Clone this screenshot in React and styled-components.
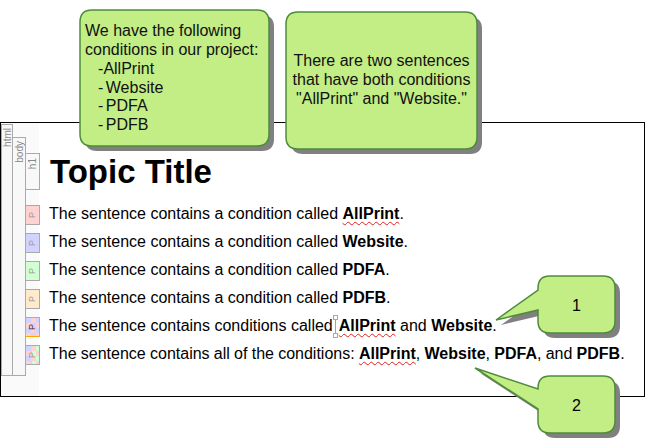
import React from "react";
import styled, { createGlobalStyle, css } from "styled-components";

const Global = createGlobalStyle`
  html, body { margin: 0; padding: 0; background: #fff; }
  body { font-family: "Liberation Sans", Arial, sans-serif; color: #000; }
`;

const Page = styled.div`
  position: relative;
  width: 645px;
  height: 448px;
  overflow: hidden;
  padding-top: 122px;
  box-sizing: border-box;
`;

const Frame = styled.div`
  display: flex;
  box-sizing: border-box;
  width: 645px;
  height: 275px;
  border: 1px solid #000;
  background: #fff;
`;

const Gutter = styled.div`
  display: flex;
  align-items: flex-start;
  width: 38px;
  flex: none;
  background: #fafafa;
`;

const StructTag = styled.div`
  box-sizing: border-box;
  flex: none;
  display: flex;
  justify-content: center;
  align-items: flex-start;
  border: 1px solid #aaa;
  background: #f8f8f8;
  color: #8a8a8a;
  font-size: 10px;
  line-height: 11px;
`;

const HtmlTag = styled(StructTag)`
  width: 12px;
  height: 252px;
  margin-top: 1px;
  padding-top: 3px;
`;

const BodyTag = styled(StructTag)`
  width: 14px;
  height: 239px;
  margin-top: 14px;
  margin-left: -1px;
  padding-top: 3px;
`;

const Label = styled.span`
  writing-mode: vertical-rl;
  transform: rotate(180deg);
  white-space: nowrap;
`;

const TagColumn = styled.div`
  display: flex;
  flex-direction: column;
  width: 14px;
  margin-left: -1px;
  margin-top: 30px;
`;

const H1Tag = styled(StructTag)`
  width: 15px;
  height: 37px;
  margin-bottom: 15px;
  padding-top: 4px;
`;

const swatch = {
  red: css`background: #ffd2d2;`,
  blue: css`background: #d2d2ff;`,
  green: css`background: #d2ffd2;`,
  tan: css`background: #ffeacc;`,
  both: css`
    background-color: #d2d2ff;
    background-image: conic-gradient(#ffd2d2 25%, transparent 0 50%, #ffd2d2 0 75%, transparent 0);
    background-size: 10px 10px;
  `,
  all: css`
    background-color: #d2d2ff;
    background-image:
      conic-gradient(#ffd2d2 25%, transparent 0 50%, #ffd2d2 0 75%, transparent 0),
      linear-gradient(90deg, transparent 50%, #d2ffd2 50%);
    background-size: 10px 10px, 100% 100%;
  `,
};

const PTag = styled(StructTag)`
  width: 15px;
  height: 20px;
  margin-bottom: 8px;
  justify-content: center;
  align-items: center;
  font-size: 9px;
  color: ${(p) => (p.$active ? "#333" : "#999")};
  border-color: ${(p) => (p.$active ? "#ffa500" : "#aaa")};
  ${(p) => swatch[p.$tone]}
`;

const Content = styled.div`
  flex: 1;
  padding: 30px 0 0 10px;
`;

const Title = styled.h1`
  margin: 0 0 14px 1px;
  font-size: 33px;
  line-height: 37px;
  font-weight: 700;
`;

const Sentence = styled.p`
  position: relative;
  margin: 0;
  height: 28px;
  font-size: 16px;
  line-height: 20px;
  white-space: nowrap;
  word-spacing: ${(p) => (p.$tight ? "-0.2px" : "0")};
`;

const Term = styled.b`
  font-weight: 700;
  ${(p) => p.$flagged && css`
    text-decoration: underline wavy #e02020 1px;
    text-underline-offset: 2px;
    text-decoration-skip-ink: none;
  `}
`;

const Caret = styled.span`
  display: inline-block;
  position: relative;
  width: 6px;
  height: 20px;
  vertical-align: top;
  &::before {
    content: "";
    position: absolute;
    left: 2px;
    top: 0;
    bottom: 0;
    border-left: 1px solid #a0a0a0;
  }
`;

const CaretEnd = styled.i`
  position: absolute;
  left: 0;
  ${(p) => (p.$bottom ? "bottom: -2px;" : "top: -1px;")}
  box-sizing: border-box;
  width: 5px;
  height: 5px;
  border: 1px solid #a8a8a8;
  background: #fff;
`;

const Callout = styled.div`
  position: absolute;
  left: ${(p) => p.$x}px;
  top: ${(p) => p.$y}px;
  width: ${(p) => p.$w}px;
  height: ${(p) => p.$h}px;
`;

const CalloutShape = styled.svg`
  position: absolute;
  left: 0;
  top: 0;
  overflow: visible;
`;

const NoteText = styled.div`
  position: relative;
  box-sizing: border-box;
  height: 100%;
  display: flex;
  flex-direction: column;
  justify-content: center;
  font-size: 16px;
  line-height: 18.7px;
  color: #111;
  text-align: ${(p) => p.$align || "left"};
  padding: ${(p) => (p.$align ? "0 5px" : "1px 5px 0")};
`;

const ListLine = styled.div`
  padding-left: 13px;
  word-spacing: ${(p) => p.$gap}px;
`;

const NumberText = styled.div`
  position: absolute;
  left: 0;
  right: 0;
  top: 20px;
  text-align: center;
  font-size: 16px;
  line-height: 20px;
`;

const FILL = "#c3ed85";
const STROKE = "#4e8c3a";

function Shape({ w, h, r = 12, tail }) {
  const d = [
    `M${r} 0 H${w - r} Q${w} 0 ${w} ${r} V${h - r} Q${w} ${h} ${w - r} ${h} H${r} Q0 ${h} 0 ${h - r}`,
    tail ? `V${tail[2]} L${tail[1][0]} ${tail[1][1]} L0 ${tail[0]}` : "",
    `V${r} Q0 0 ${r} 0 Z`,
  ].join(" ");
  return (
    <CalloutShape width={w} height={h} viewBox={`0 0 ${w} ${h}`}>
      <path d={d} fill="#808080" transform="translate(5 5)" />
      <path d={d} fill={FILL} stroke={STROKE} strokeWidth="1.5" />
    </CalloutShape>
  );
}

const rows = [
  { tone: "red", body: <>The sentence contains a condition called <Term $flagged>AllPrint</Term>.</> },
  { tone: "blue", body: <>The sentence contains a condition called <Term>Website</Term>.</> },
  { tone: "green", body: <>The sentence contains a condition called <Term>PDFA</Term>.</> },
  { tone: "tan", body: <>The sentence contains a condition called <Term>PDFB</Term>.</> },
  { tone: "both", active: true, body: <>The sentence contains conditions called<Caret><CaretEnd /><CaretEnd $bottom /></Caret><Term $flagged>AllPrint</Term> and <Term>Website</Term>.</> },
  { tone: "all", tight: true, body: <>The sentence contains all of the conditions: <Term $flagged>AllPrint</Term>, <Term>Website</Term>, <Term>PDFA</Term>, and <Term>PDFB</Term>.</> },
];

export default function App() {
  return (
    <Page>
      <Global />
      <Frame>
        <Gutter>
          <HtmlTag><Label>html</Label></HtmlTag>
          <BodyTag><Label>body</Label></BodyTag>
          <TagColumn>
            <H1Tag><Label>h1</Label></H1Tag>
            {rows.map((r, i) => (
              <PTag key={i} $tone={r.tone} $active={r.active}><Label>P</Label></PTag>
            ))}
          </TagColumn>
        </Gutter>
        <Content>
          <Title>Topic Title</Title>
          {rows.map((r, i) => <Sentence key={i} $tight={r.tight}>{r.body}</Sentence>)}
        </Content>
      </Frame>

      <Callout $x={80} $y={10} $w={189} $h={136}>
        <Shape w={189} h={136} />
        <NoteText>
          <div>We have the following</div>
          <div>conditions in our project:</div>
          <ListLine $gap={-3.5}>- AllPrint</ListLine>
          <ListLine $gap={-2}>- Website</ListLine>
          <ListLine $gap={-2}>- PDFA</ListLine>
          <ListLine $gap={-2}>- PDFB</ListLine>
        </NoteText>
      </Callout>

      <Callout $x={286} $y={12} $w={191} $h={137}>
        <Shape w={191} h={137} />
        <NoteText $align="center">
          <div>There are two sentences</div>
          <div>that have both conditions</div>
          <div>"AllPrint" and "Website."</div>
        </NoteText>
      </Callout>

      <Callout $x={538} $y={276} $w={77} $h={57}>
        <Shape w={77} h={57} tail={[14, [-42, 44], 34]} />
        <NumberText>1</NumberText>
      </Callout>

      <Callout $x={538} $y={376} $w={77} $h={57}>
        <Shape w={77} h={57} tail={[13, [-63, -8], 33]} />
        <NumberText>2</NumberText>
      </Callout>
    </Page>
  );
}
